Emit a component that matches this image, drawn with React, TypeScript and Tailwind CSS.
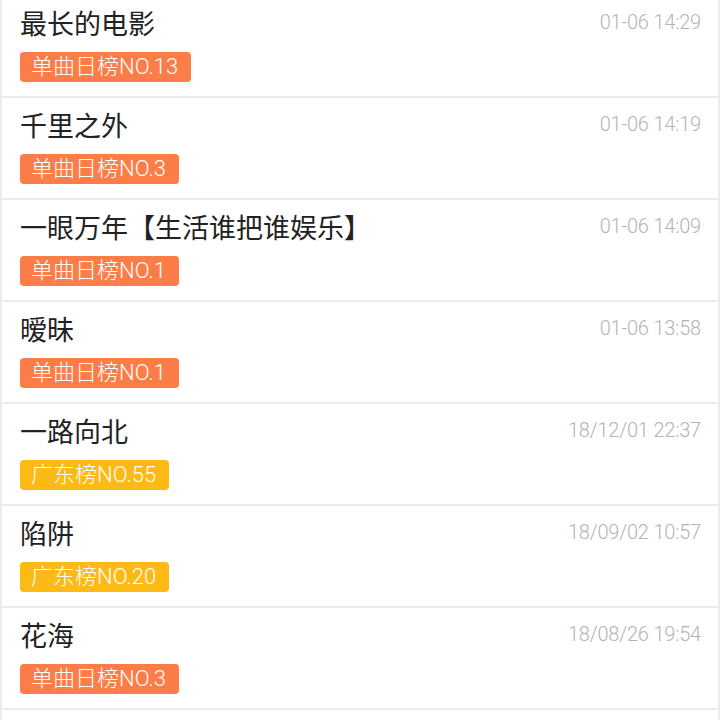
const songs = [
  { title: "最长的电影", tag: "单曲日榜NO.13", kind: "day", time: "01-06 14:29" },
  { title: "千里之外", tag: "单曲日榜NO.3", kind: "day", time: "01-06 14:19" },
  { title: "一眼万年【生活谁把谁娱乐】", tag: "单曲日榜NO.1", kind: "day", time: "01-06 14:09" },
  { title: "暧昧", tag: "单曲日榜NO.1", kind: "day", time: "01-06 13:58" },
  { title: "一路向北", tag: "广东榜NO.55", kind: "gd", time: "18/12/01 22:37" },
  { title: "陷阱", tag: "广东榜NO.20", kind: "gd", time: "18/09/02 10:57" },
  { title: "花海", tag: "单曲日榜NO.3", kind: "day", time: "18/08/26 19:54" },
  { title: "", tag: "", kind: "day", time: "" },
];

export default function App() {
  return (
    <div className="w-[720px] h-[720px] overflow-hidden bg-white font-['Roboto','Noto_Sans_CJK_SC',sans-serif]">
      <ul className="-mt-[4px] border-x-2 border-[#ebebeb]">
        {songs.map((s, i) => (
          <li
            key={i}
            className="flex justify-between pl-[18px] pr-[17px] pt-[13px] pb-[14px] h-[102px] border-b-2 border-[#ebebeb]"
          >
            <div className="flex flex-col items-start">
              <div className="h-[32px] leading-[32px] text-[27px] text-[#222]">{s.title}</div>
              {s.tag && (
                <span
                  className={
                    "mt-[11px] h-[30px] leading-[30px] pl-[11px] pr-[13px] rounded-[4px] text-[22px] font-light text-white " +
                    (s.kind === "gd" ? "bg-[#fdb914]" : "bg-[#fc7d47]")
                  }
                >
                  {s.tag}
                </span>
              )}
            </div>
            <div className="h-[26px] leading-[26px] text-[20px] font-light tracking-[-0.2px] text-[#b4b4b4]">{s.time}</div>
          </li>
        ))}
      </ul>
    </div>
  );
}
